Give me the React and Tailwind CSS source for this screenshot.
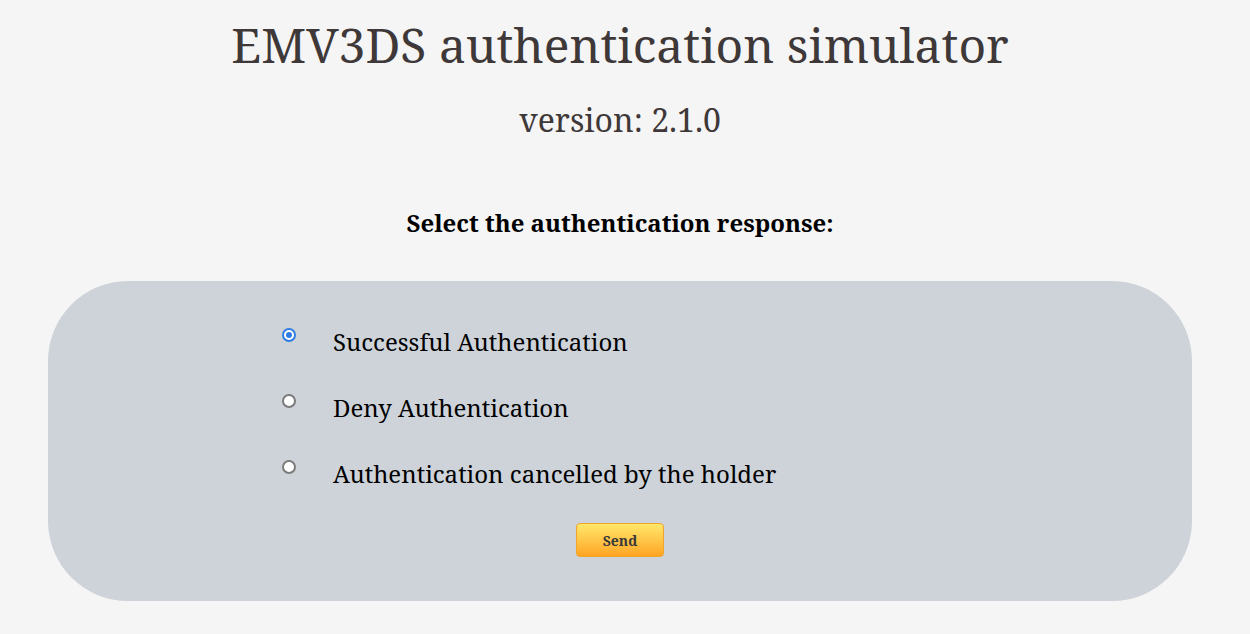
import { useState } from "react";

const options = [
  { id: "success", label: "Successful Authentication" },
  { id: "deny", label: "Deny Authentication" },
  { id: "cancel", label: "Authentication cancelled by the holder" },
];

export default function App() {
  const [choice, setChoice] = useState("success");

  return (
    <div className="min-h-[634px] bg-[#f5f5f5] font-['Noto_Serif',serif]">
      <div className="w-[1240px] flex flex-col items-center">
        <h1 className="mt-[14px] text-[48px] leading-[62px] text-[#3e3838]">
          EMV3DS authentication simulator
        </h1>
        <h2 className="mt-[22px] text-[32px] leading-[44px] text-[#3e3838]">
          version: 2.1.0
        </h2>
        <p className="mt-[65px] text-[24px] leading-[32px] font-bold text-black">
          Select the authentication response:
        </p>

        <form className="mt-[42px] w-[1144px] h-[320px] rounded-[80px] bg-[#cdd3d9] flex flex-col pt-[43px]">
          <div className="flex flex-col gap-[30px] pl-[234px]">
            {options.map((o) => {
              const on = choice === o.id;
              return (
                <label key={o.id} className="flex items-start gap-[37px] cursor-pointer">
                  <input
                    type="radio"
                    name="response"
                    checked={on}
                    onChange={() => setChoice(o.id)}
                    className="sr-only"
                  />
                  <span
                    className={
                      on
                        ? "mt-[4px] w-[14px] h-[14px] rounded-full border-2 border-[#2f7de1] bg-white flex items-center justify-center"
                        : "mt-[4px] w-[14px] h-[14px] rounded-full border-2 border-[#7b7b7b] bg-white"
                    }
                  >
                    {on && <span className="w-[6px] h-[6px] rounded-full bg-[#2f7de1]" />}
                  </span>
                  <span className="text-[24px] leading-[36px] text-black">{o.label}</span>
                </label>
              );
            })}
          </div>
          <div className="flex justify-center mt-[31px]">
            <button
              type="button"
              className="w-[88px] h-[34px] rounded-[4px] border border-[#f2a52a] bg-gradient-to-b from-[#ffe768] to-[#ffa51f] text-[14px] font-bold text-[#3a3a3a]"
            >
              Send
            </button>
          </div>
        </form>
      </div>
    </div>
  );
}
